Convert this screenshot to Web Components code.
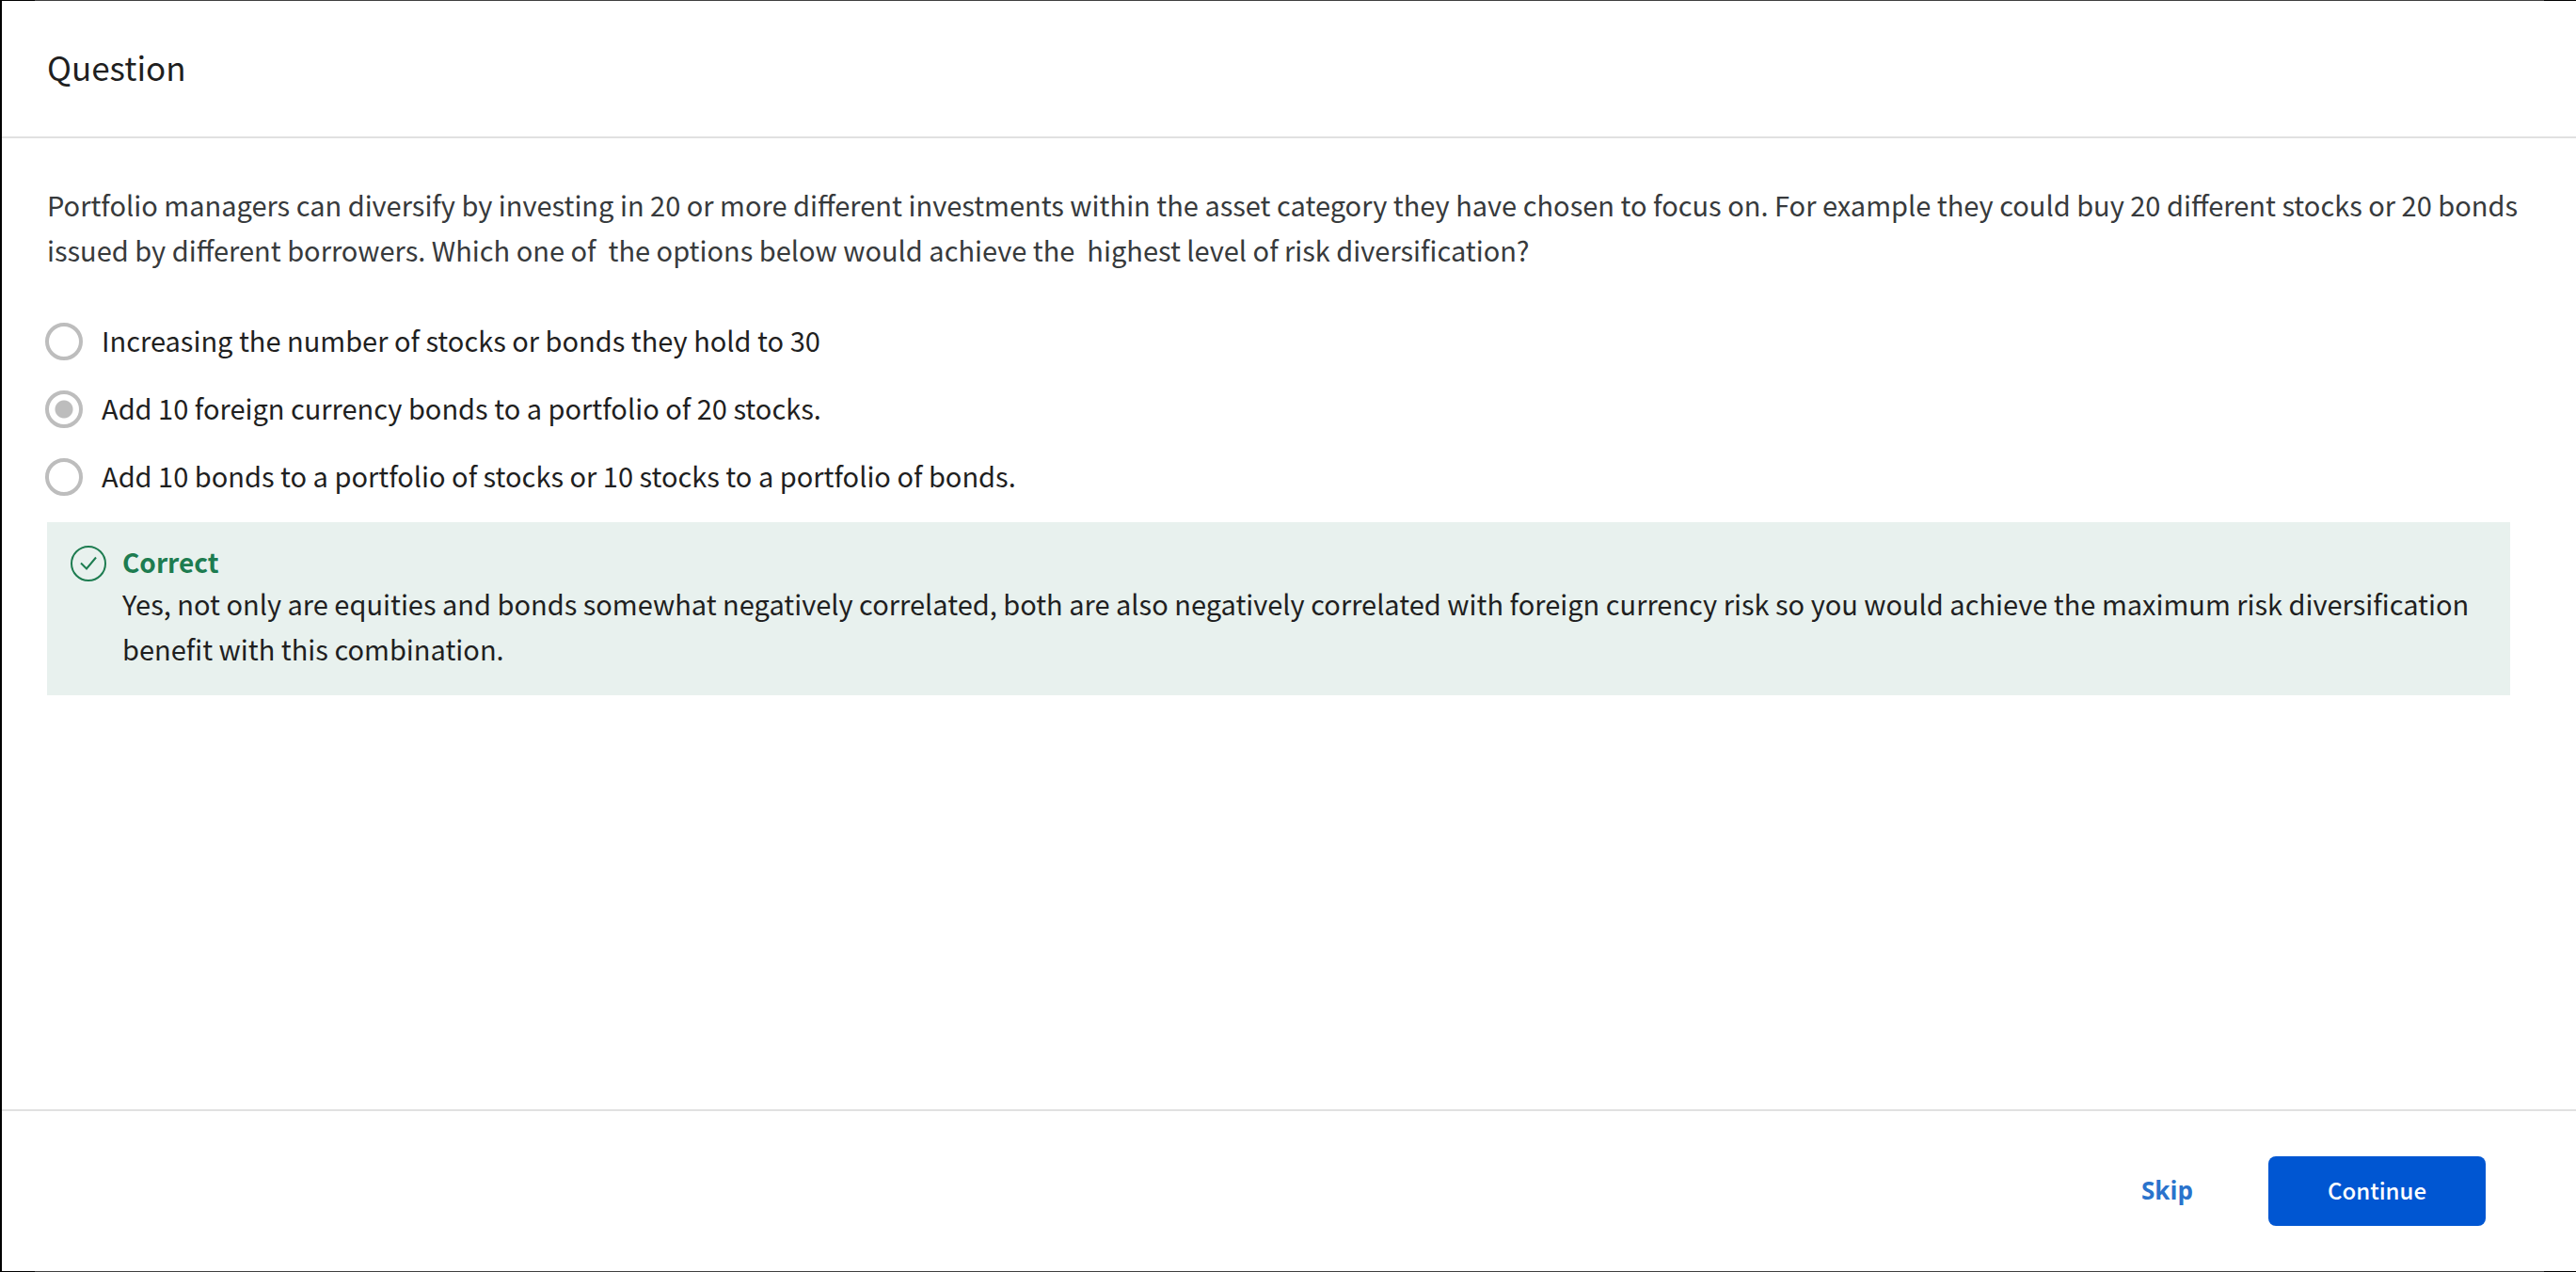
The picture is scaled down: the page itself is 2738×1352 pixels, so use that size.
<!DOCTYPE html>
<html lang="en">
<head>
<meta charset="utf-8">
<title>Question</title>
<style>
  html, body { margin: 0; height: 100%; }
  body { font-family: "Noto Sans CJK SC", "Noto Sans", sans-serif; color: #1f1f1f; background: #fff; }
</style>
</head>
<body>
<question-dialog>
  <span slot="title">Question</span>
  <question-prompt>Portfolio managers can diversify by investing in 20 or more different investments within the asset category they have chosen to focus on. For example they could buy 20 different stocks or 20 bonds issued by different borrowers. Which one of&nbsp; the options below would achieve the&nbsp; highest level of risk diversification?</question-prompt>
  <option-list>
    <answer-option>Increasing the number of stocks or bonds they hold to 30</answer-option>
    <answer-option checked>Add 10 foreign currency bonds to a portfolio of 20 stocks.</answer-option>
    <answer-option>Add 10 bonds to a portfolio of stocks or 10 stocks to a portfolio of bonds.</answer-option>
  </option-list>
  <answer-feedback>
    <span slot="heading">Correct</span>
    Yes, not only are equities and bonds somewhat negatively correlated, both are also negatively correlated with foreign currency risk so you would achieve the maximum risk diversification benefit with this combination.
  </answer-feedback>
  <dialog-button slot="actions" variant="link">Skip</dialog-button>
  <dialog-button slot="actions" variant="primary">Continue</dialog-button>
</question-dialog>

<script>
  function define(name, markup, setup) {
    const template = document.createElement('template');
    template.innerHTML = markup;
    customElements.define(name, class extends HTMLElement {
      constructor() {
        super();
        this.attachShadow({ mode: 'open' }).append(template.content.cloneNode(true));
      }
      connectedCallback() { if (setup) setup(this, this.shadowRoot); }
    });
  }

  define('question-dialog', `
    <style>
      :host {
        box-sizing: border-box; display: flex; flex-direction: column; min-height: 100%;
        border-left: 2px solid #000;
        background:
          linear-gradient(90deg, #000 35px, #404040 35px calc(100% - 34px), #000 calc(100% - 34px)) top / 100% 1px no-repeat,
          linear-gradient(90deg, #000 35px, #404040 35px calc(100% - 34px), #000 calc(100% - 34px)) bottom / 100% 1px no-repeat,
          #fff;
      }
      header { padding: 46px 48px 50px; border-bottom: 2px solid #e1e1e1; margin-top: 1px; }
      h1 { margin: 0; font-size: 35px; line-height: 48px; font-weight: 400; }
      main { flex: 1; padding: 46px 48px 48px; }
      footer {
        display: flex; justify-content: flex-end; align-items: center; gap: 80px;
        padding: 48px 96px; border-top: 2px solid #e1e1e1; margin-bottom: 1px;
      }
    </style>
    <header><h1><slot name="title"></slot></h1></header>
    <main><slot></slot></main>
    <footer><slot name="actions"></slot></footer>`);

  define('question-prompt', `
    <style>
      :host { display: block; color: #373a3c; }
      p { margin: 0; font-size: 29px; line-height: 48px; }
    </style>
    <p><slot></slot></p>`);

  define('option-list', `
    <style>
      :host { display: flex; flex-direction: column; gap: 24px; padding: 50px 0 24px; }
    </style>
    <slot></slot>`);

  define('answer-option', `
    <style>
      :host { display: block; }
      label { display: flex; align-items: flex-start; gap: 20px; min-height: 48px; font-size: 29px; line-height: 44px; }
      input {
        appearance: none; box-sizing: border-box; flex: none; width: 40px; height: 40px; margin: 4px 0 0 -2px;
        border: 4px solid #bdbdbd; border-radius: 50%; background: #fff;
      }
      input:checked { background: radial-gradient(circle, #bdbdbd 9px, #fff 10px); }
    </style>
    <label><input type="radio" name="answer"><span><slot></slot></span></label>`,
    (host, root) => { root.querySelector('input').checked = host.hasAttribute('checked'); });

  define('answer-feedback', `
    <style>
      :host { display: flex; gap: 16px; margin-right: 22px; padding: 22px 24px 26px; background: #e8f1ee; }
      svg { flex: none; width: 40px; height: 40px; margin-top: 2px; }
      h2 { margin: 0; font-size: 28px; line-height: 40px; font-weight: 600; color: #1d7c50; }
      p { margin: 0; font-size: 29px; line-height: 48px; }
    </style>
    <svg viewBox="0 0 40 40" fill="none" stroke="#1d7c50" stroke-width="2" aria-hidden="true">
      <circle cx="20" cy="20" r="18"/><path d="M12 19.5l6 6L28 13.5"/>
    </svg>
    <div><h2><slot name="heading"></slot></h2><p><slot></slot></p></div>`);

  define('dialog-button', `
    <style>
      :host { display: block; }
      button { display: block; border: 0; font: 500 24px/32px "Noto Sans CJK SC", "Noto Sans", sans-serif; cursor: pointer; }
      :host([variant="primary"]) button { padding: 20px 63px 22px; border-radius: 8px; background: #0056d2; color: #fff; }
      :host([variant="link"]) button { padding: 0 0 2px; background: none; color: #2a73cc; font: 700 26px/32px "Open Sans", "Noto Sans", sans-serif; }
    </style>
    <button type="button"><slot></slot></button>`);
</script>
</body>
</html>
